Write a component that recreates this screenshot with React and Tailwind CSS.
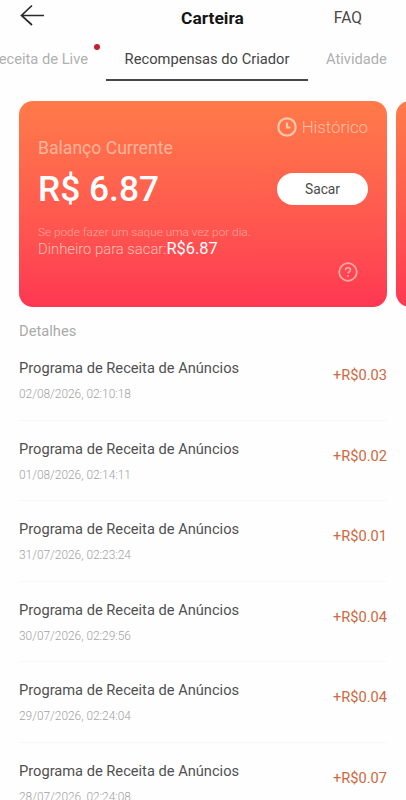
const transactions = [
  { date: '02/08/2026, 02:10:18', amount: '+R$0.03' },
  { date: '01/08/2026, 02:14:11', amount: '+R$0.02' },
  { date: '31/07/2026, 02:23:24', amount: '+R$0.01' },
  { date: '30/07/2026, 02:29:56', amount: '+R$0.04' },
  { date: '29/07/2026, 02:24:04', amount: '+R$0.04' },
  { date: '28/07/2026, 02:24:08', amount: '+R$0.07' },
];

function Header() {
  return (
    <header className="grid grid-cols-3 items-center h-[35px] shrink-0">
      <button className="pl-5" aria-label="Voltar">
        <svg className="w-6 h-[22px] -mt-[5px]" viewBox="0 0 24 22" fill="none" stroke="#2a2a2a" strokeWidth="1.7">
          <path d="M24 11.5H1.5M12 1.5L1.5 11.5L12 21" />
        </svg>
      </button>
      <h1 className="text-center text-[17.4px] leading-5 font-bold text-[#161616] pl-[19px]">Carteira</h1>
      <button className="justify-self-end mr-11 text-[15.6px] leading-5 text-[#484848]">FAQ</button>
    </header>
  );
}

function Tabs() {
  return (
    <nav className="flex h-[46px] shrink-0 text-[14.7px] whitespace-nowrap overflow-hidden">
      <div className="w-[106px] shrink-0 flex justify-end pr-1.5">
        <span className="pt-[12px] leading-6 text-[#b0b0b0]">Receita de Live</span>
        <span className="w-[6px] h-[6px] mt-[9px] ml-[6px] shrink-0 rounded-full bg-[#c3202b]" />
      </div>
      <div className="w-[202px] shrink-0 pt-[12px] text-center leading-6 text-[#444] border-b-2 border-[#484848]">
        Recompensas do Criador
      </div>
      <div className="pt-[12px] pl-[18px] leading-6 text-[#b0b0b0]">Atividade</div>
    </nav>
  );
}

function BalanceCard() {
  return (
    <section className="flex justify-between w-[368px] h-[206px] shrink-0 rounded-[14px] px-[19px] bg-linear-to-b from-[#ff7a49] to-[#ff3652] text-white">
      <div className="whitespace-nowrap">
        <div className="mt-[36px] text-[17.6px] leading-[22px] text-[#ffb59c]">Balanço Currente</div>
        <div className="mt-[10px] text-[35.3px] leading-10 font-medium">R$ 6.87</div>
        <div className="mt-[15px] text-[11.8px] leading-4 font-light text-[#ffa79d]">Se pode fazer um saque uma vez por dia.</div>
        <div className="text-[14.8px] leading-[18px] font-light text-[#ffc0b8]">
          Dinheiro para sacar:<span className="text-[16.4px] font-normal text-white">R$6.87</span>
        </div>
      </div>
      <div className="flex flex-col items-end">
        <button className="flex items-center gap-[5px] mt-[15px] text-[16.8px] leading-[22px] font-light text-[#ffc0a2]">
          <svg className="w-5 h-5" viewBox="0 0 20 20" fill="none" stroke="#ffc7aa" strokeWidth="2.2">
            <circle cx="10" cy="10" r="8.7" />
            <path d="M10 5.5V10.5H13.5" />
          </svg>
          Histórico
        </button>
        <button className="mt-[35px] w-[91px] h-8 rounded-full bg-white text-[13.8px] text-[#4c4c4c]">Sacar</button>
        <svg className="w-5 h-5 mt-[57px] mr-[10px]" viewBox="0 0 20 20" fill="none" stroke="#ffa7a2" strokeWidth="1.8">
          <circle cx="10" cy="10" r="8.8" />
          <path d="M7.5 8.2C7.5 6.7 8.6 5.8 10 5.8S12.5 6.7 12.5 8C12.5 9.6 10 9.7 10 11.6M10 13.1V14.7" strokeWidth="1.6" />
        </svg>
      </div>
    </section>
  );
}

function TransactionRow({ date, amount }) {
  return (
    <li className="flex justify-between h-[80.5px] border-b border-[#f7f7f7]">
      <div>
        <div className="mt-[18px] text-[14.65px] leading-5 text-[#505050]">Programa de Receita de Anúncios</div>
        <div className="mt-[8px] text-[11.9px] leading-4 font-light text-[#a2a2a2]">{date}</div>
      </div>
      <div className="mt-[25px] text-[14.6px] leading-5 text-[#cd6841]">{amount}</div>
    </li>
  );
}

export default function App() {
  return (
    <div className="flex flex-col w-full h-screen overflow-hidden bg-[#fefefe] font-[Roboto,sans-serif]">
      <Header />
      <Tabs />
      <div className="flex gap-[9px] mt-5 pl-[19px] overflow-hidden shrink-0">
        <BalanceCard />
        <div className="w-[368px] h-[206px] shrink-0 rounded-[14px] bg-linear-to-b from-[#ff7a49] to-[#ff3652]" />
      </div>
      <main className="px-[19px]">
        <h2 className="mt-[14px] text-[14.7px] leading-5 text-[#aaa]">Detalhes</h2>
        <ul className="-mt-px">
          {transactions.map((t) => (
            <TransactionRow key={t.date} {...t} />
          ))}
        </ul>
      </main>
    </div>
  );
}
